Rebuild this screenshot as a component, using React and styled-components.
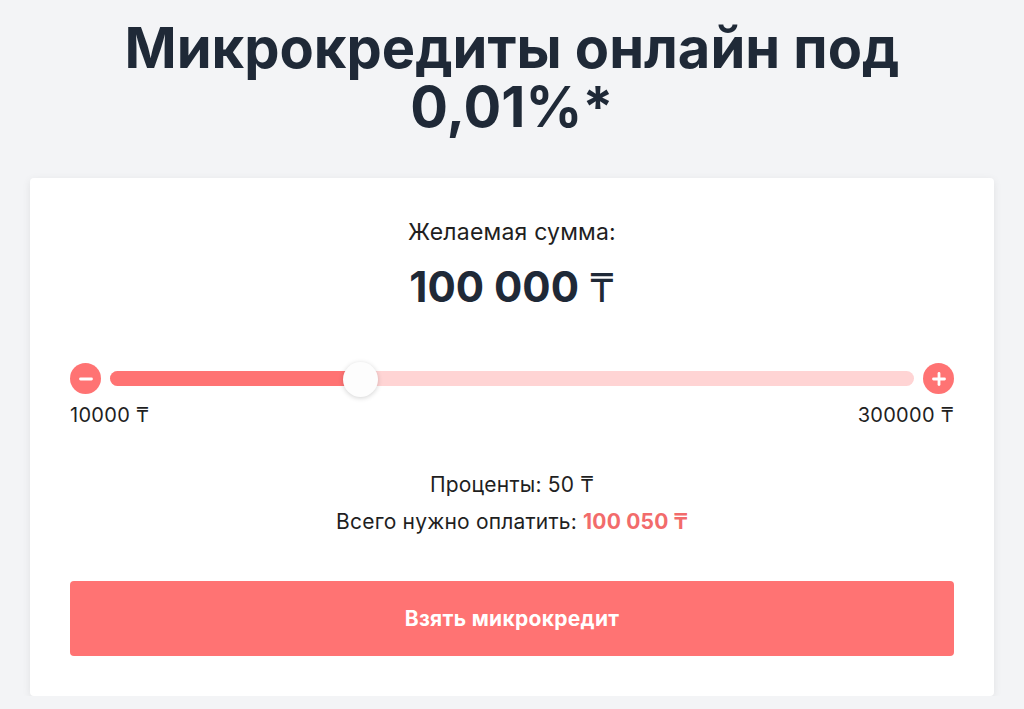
import React from "react";
import styled, { createGlobalStyle } from "styled-components";

const GlobalStyle = createGlobalStyle`
  body {
    margin: 0;
    background: #f3f4f6;
    font-family: Inter, "Noto Sans", sans-serif;
    color: #1f2937;
  }
`;

const Page = styled.div`
  display: flex;
  flex-direction: column;
  align-items: center;
  padding: 19px 30px 0;
`;

const Title = styled.h1`
  margin: 0;
  width: 800px;
  text-align: center;
  font-size: 56px;
  line-height: 59px;
  font-weight: 700;
  color: #1f2937;
`;

const Card = styled.div`
  margin-top: 41px;
  width: 100%;
  box-sizing: border-box;
  background: #fff;
  border-radius: 4px;
  box-shadow: 0 2px 8px rgba(0, 0, 0, 0.08);
  padding: 40px 40px 40px;
  display: flex;
  flex-direction: column;
  align-items: center;
`;

const Label = styled.div`
  font-size: 23px;
  line-height: 28px;
  letter-spacing: 0.2px;
  color: #1f1f1f;
`;

const Amount = styled.div`
  margin-top: 16px;
  font-size: 42px;
  line-height: 50px;
  font-weight: 700;
  color: #1f2937;
`;

const Currency = styled.span`
  font-weight: 400;
  font-size: 0.95em;
`;

const SliderRow = styled.div`
  margin-top: 50px;
  width: 100%;
  display: flex;
  align-items: center;
  gap: 9px;
`;

const RoundButton = styled.button`
  flex: none;
  width: 31px;
  height: 31px;
  border-radius: 50%;
  border: none;
  padding: 0;
  background: #ff7373;
  display: flex;
  align-items: center;
  justify-content: center;
  cursor: pointer;
`;

const Track = styled.div`
  position: relative;
  flex: 1;
  height: 15px;
  border-radius: 8px;
  background: #ffd4d4;
`;

const Fill = styled.div`
  height: 100%;
  border-radius: 8px;
  background: #ff7373;
`;

const Thumb = styled.div`
  position: absolute;
  top: 50%;
  width: 35px;
  height: 35px;
  margin-left: -17px;
  margin-top: -17px;
  border-radius: 50%;
  background: #fdfdfd;
  box-shadow: 0 1px 5px rgba(0, 0, 0, 0.18);
`;

const Limits = styled.div`
  margin-top: 8px;
  width: 100%;
  display: flex;
  justify-content: space-between;
  font-size: 20px;
  line-height: 26px;
  letter-spacing: 0.3px;
  color: #1f1f1f;
`;

const Info = styled.div`
  margin-top: ${(p) => p.$top || 0}px;
  font-size: 21px;
  line-height: 28px;
  letter-spacing: 0.2px;
  color: #1f1f1f;
`;

const Accent = styled.span`
  color: #f26b6b;
  font-weight: 700;
`;

const Submit = styled.button`
  margin-top: 45px;
  width: 100%;
  height: 75px;
  border: none;
  border-radius: 4px;
  background: #ff7373;
  color: #fff;
  font-family: Inter, "Noto Sans", sans-serif;
  font-size: 21px;
  font-weight: 700;
  letter-spacing: 0.3px;
  cursor: pointer;
`;

const Icon = ({ plus }) => (
  <svg width="16" height="16" viewBox="0 0 16 16">
    <path d="M2.5 8h11" stroke="#fff" strokeWidth="2.8" strokeLinecap="round" />
    {plus && <path d="M8 2.5v11" stroke="#fff" strokeWidth="2.8" strokeLinecap="round" />}
  </svg>
);

export default function App() {
  const min = 10000;
  const max = 300000;
  const value = 100000;
  const pct = ((value - min) / (max - min)) * 100;

  return (
    <Page>
      <GlobalStyle />
      <Title>Микрокредиты онлайн под 0,01%*</Title>
      <Card>
        <Label>Желаемая сумма:</Label>
        <Amount>
          100 000 <Currency>₸</Currency>
        </Amount>
        <SliderRow>
          <RoundButton aria-label="minus">
            <Icon />
          </RoundButton>
          <Track>
            <Fill style={{ width: `${pct}%` }} />
            <Thumb style={{ left: `${pct}%` }} />
          </Track>
          <RoundButton aria-label="plus">
            <Icon plus />
          </RoundButton>
        </SliderRow>
        <Limits>
          <span>10000 ₸</span>
          <span>300000 ₸</span>
        </Limits>
        <Info $top={43}>Проценты: 50 ₸</Info>
        <Info $top={9}>
          Всего нужно оплатить: <Accent>100 050 ₸</Accent>
        </Info>
        <Submit>Взять микрокредит</Submit>
      </Card>
    </Page>
  );
}
